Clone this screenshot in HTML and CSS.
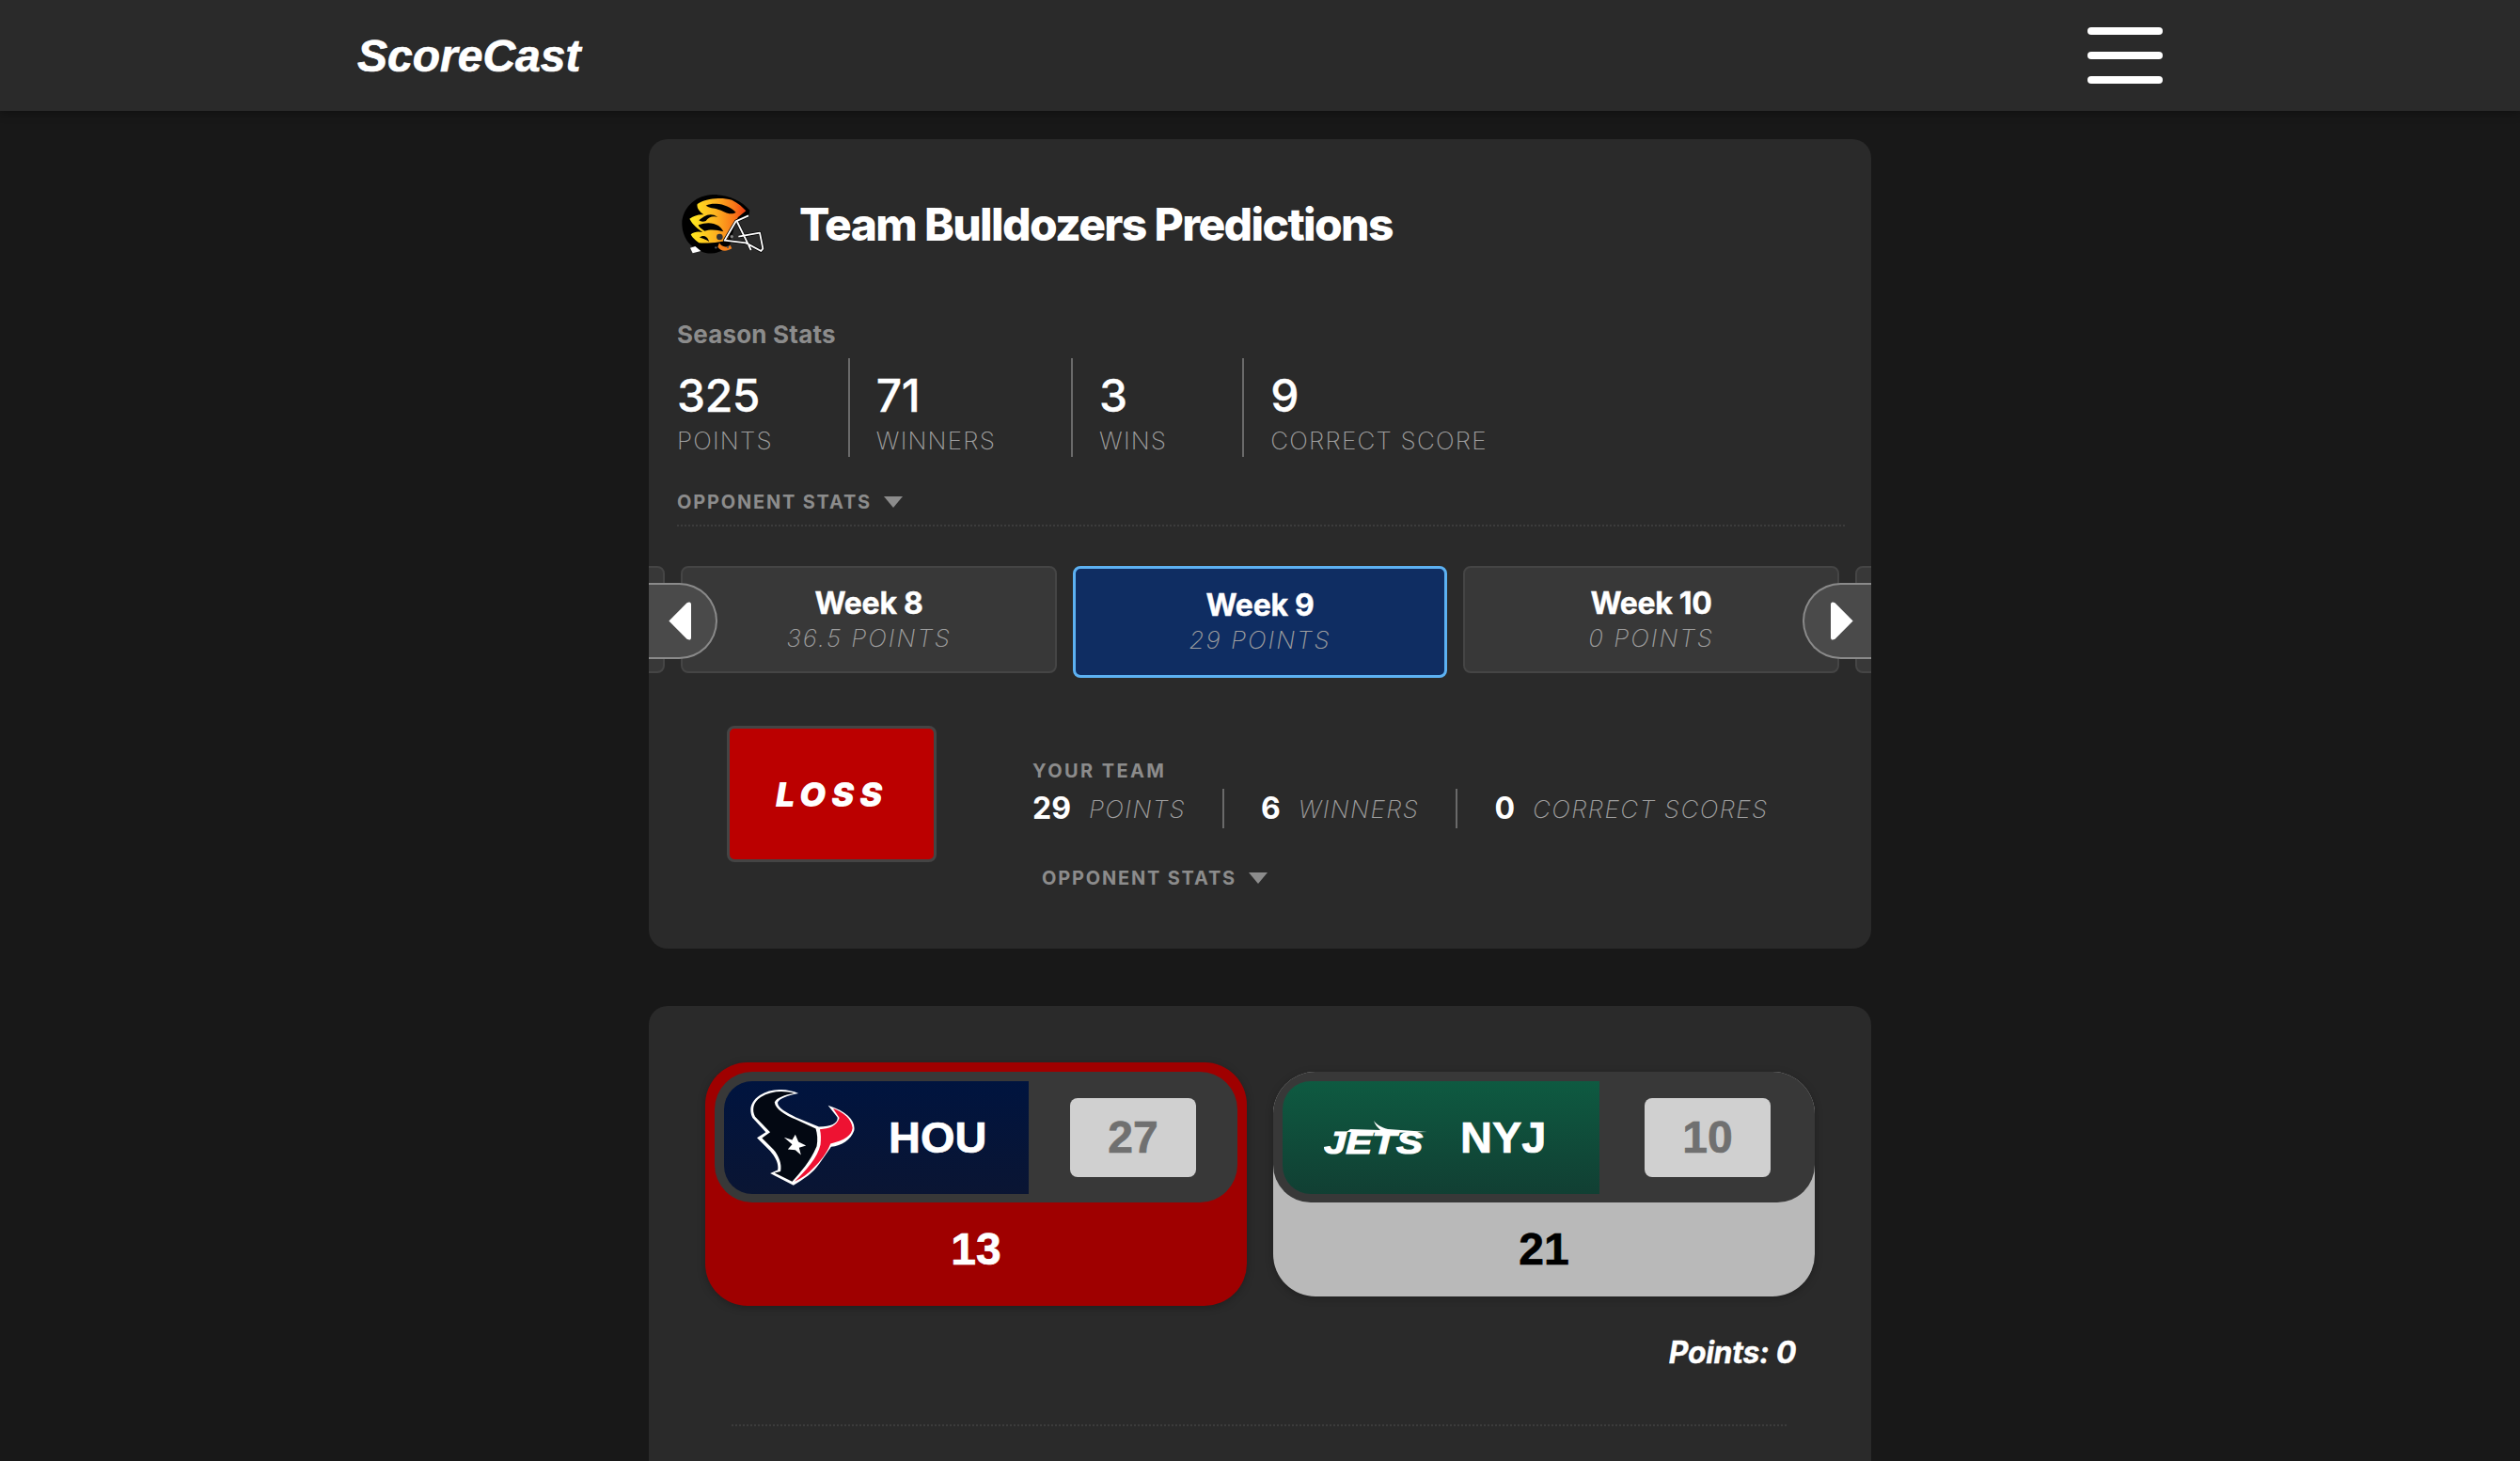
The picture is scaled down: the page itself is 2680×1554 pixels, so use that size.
FILE: index.html
```html
<!DOCTYPE html>
<html lang="en">
<head>
<meta charset="utf-8">
<title>ScoreCast</title>
<link rel="stylesheet" href="styles.css">
</head>
<body>
<header class="topbar">
  <div class="brand">ScoreCast</div>
  <div class="burger"><span></span><span></span><span></span></div>
</header>
<main class="page">
  <section class="card summary">
    <div class="title-row">
      <svg class="helmet" viewBox="45 75 264 195" aria-hidden="true">
        <defs>
          <linearGradient id="flame" gradientUnits="userSpaceOnUse" x1="70" x2="250" y1="0" y2="0">
            <stop offset="0" stop-color="#ffec20"/><stop offset=".45" stop-color="#fdb420"/><stop offset=".8" stop-color="#f97518"/><stop offset="1" stop-color="#ee3a12"/>
          </linearGradient>
        </defs>
        <path d="M46 175C44 125 85 84 135 79C185 74 235 95 262 128L258 150L215 170L200 235C180 262 140 275 105 258C70 245 48 215 46 175Z" fill="#000"/>
        <path d="M95 108C120 90 170 85 205 95C225 105 240 118 250 130L225 150L205 185L190 225C170 228 130 235 100 232C90 225 78 215 74 205C85 195 100 195 112 198C95 185 80 175 70 155C85 145 100 140 115 142C100 130 92 120 95 108Z" fill="url(#flame)"/>
        <path d="M122 113C150 100 195 110 218 135C205 143 190 138 170 128C150 120 135 122 122 113Z" fill="#000"/>
        <path d="M100 160C115 148 135 132 160 150C145 145 130 150 122 162C115 165 105 165 100 160Z" fill="#000"/>
        <path d="M98 175C130 162 165 168 178 196C160 190 135 188 118 194C108 188 100 182 98 175Z" fill="#000"/>
        <path d="M102 215C112 205 128 210 132 228C122 220 112 218 102 215Z" fill="#000"/>
        <path d="M165 232C172 245 185 248 200 240L205 250C185 262 170 258 160 245Z" fill="#f5811c"/>
        <circle cx="166" cy="213" r="10" fill="#333"/>
        <path d="M72 248L88 243L106 258L80 265Z" fill="#fff"/>
        <circle cx="154" cy="247" r="3.5" fill="#555"/><circle cx="192" cy="246" r="3.5" fill="#555"/>
        <path d="M258 145L218 163L182 224L250 232L298 258L304 250L294 200L226 212M222 165L266 255" fill="none" stroke="#000" stroke-width="10" stroke-linejoin="round"/>
        <path d="M258 145L218 163L182 224L250 232L298 258L304 250L294 200L226 212M222 165L266 255" fill="none" stroke="#fff" stroke-width="5.5" stroke-linejoin="round"/>
        <circle cx="205" cy="212" r="6" fill="#888" stroke="#111" stroke-width="2"/>
      </svg>
      <h1 class="title">Team Bulldozers Predictions</h1>
    </div>
    <div class="season-label">Season Stats</div>
    <div class="stats">
      <div class="stat"><div class="stat-value">325</div><div class="stat-name">POINTS</div></div>
      <div class="stat"><div class="stat-value">71</div><div class="stat-name">WINNERS</div></div>
      <div class="stat"><div class="stat-value">3</div><div class="stat-name">WINS</div></div>
      <div class="stat"><div class="stat-value">9</div><div class="stat-name">CORRECT SCORE</div></div>
    </div>
    <div class="toggle toggle-season">OPPONENT STATS<i class="caret"></i></div>
    <div class="rule"></div>
    <div class="weeks">
      <div class="week"></div>
      <div class="week"><b>Week 8</b><em>36.5 POINTS</em></div>
      <div class="week active"><b>Week 9</b><em>29 POINTS</em></div>
      <div class="week"><b>Week 10</b><em>0 POINTS</em></div>
      <div class="week"></div>
      <div class="arrow arrow-left"><svg viewBox="0 0 24 40" preserveAspectRatio="none" aria-hidden="true"><path d="M20 2L3 20L20 38Q24 40 24 36V4Q24 0 20 2Z" fill="#fff"/></svg></div>
      <div class="arrow arrow-right"><svg viewBox="0 0 24 40" preserveAspectRatio="none" aria-hidden="true"><path d="M4 2L21 20L4 38Q0 40 0 36V4Q0 0 4 2Z" fill="#fff"/></svg></div>
    </div>
    <div class="result">
      <div class="loss">LOSS</div>
      <div class="details">
        <div class="your-team">YOUR TEAM</div>
        <div class="tally">
          <div class="tally-item"><strong>29</strong><em>POINTS</em></div>
          <div class="tally-item"><strong>6</strong><em>WINNERS</em></div>
          <div class="tally-item"><strong>0</strong><em>CORRECT SCORES</em></div>
        </div>
        <div class="toggle toggle-week">OPPONENT STATS<i class="caret"></i></div>
      </div>
    </div>
  </section>

  <section class="card games">
    <div class="matchup">
      <div class="tile tile-loss">
        <div class="tile-top">
          <div class="team team-hou">
            <svg class="logo-hou" viewBox="85 60 335 305" aria-hidden="true">
              <path d="M238 72C200 55 150 55 115 78C85 98 80 125 92 150L134 195L106 213L148 255C165 275 176 295 172 316L148 326L222 364C255 345 285 325 305 295L342 242C375 238 405 220 415 190C420 160 395 130 332 110L362 148C365 165 345 178 303 178L230 148C200 132 170 118 172 100C178 88 205 78 238 72Z" fill="#fff"/>
              <path d="M225 72C190 62 150 64 118 84C92 102 90 125 100 146L148 195L122 214L158 250C176 270 186 298 181 320L162 325L218 352C245 322 275 290 296 240C300 220 298 200 293 184L230 155C195 140 165 122 162 100C168 86 195 76 225 72Z" fill="#030812"/>
              <path d="M306 186C335 186 360 175 368 150L348 120C380 130 408 155 410 182C408 205 385 222 340 232C328 262 310 285 285 310C268 328 250 342 226 352C260 320 300 275 308 235C310 218 310 200 306 186Z" fill="#ee1232"/>
              <path d="M228 203L238 226L262 238L240 245L246 268L228 252L204 250L218 234L192 212L218 220Z" fill="#fff"/>
            </svg>
            <span class="code">HOU</span>
          </div>
          <div class="score-box"><span>27</span></div>
        </div>
        <div class="tile-number">13</div>
      </div>
      <div class="tile tile-neutral">
        <div class="tile-top">
          <div class="team team-nyj">
            <svg class="logo-nyj" viewBox="0 0 110 44" aria-hidden="true">
              <path d="M53 4C56 8 60 11 68 13L110 16L70 17L24 16L28 13L60 14C57 11 54 8 53 4Z" fill="#fff"/>
              <text x="0" y="39" textLength="105" lengthAdjust="spacingAndGlyphs" class="jets-word">JETS</text>
            </svg>
            <span class="code">NYJ</span>
          </div>
          <div class="score-box"><span>10</span></div>
        </div>
        <div class="tile-number">21</div>
      </div>
    </div>
    <div class="points">Points: 0</div>
    <div class="rule rule-game"></div>
  </section>
</main>
</body>
</html>
```
FILE: styles.css
```css
* { box-sizing: border-box; }
html, body { margin: 0; height: 100%; }
body {
  background: #181818;
  color: #fff;
  font-family: Inter, "Liberation Sans", sans-serif;
  height: 1554px;
  overflow: hidden;
}
.topbar {
  height: 118px;
  background: #2a2a2a;
  box-shadow: 0 2px 10px rgba(0,0,0,.35);
  display: flex;
  align-items: center;
  justify-content: space-between;
  padding: 0 380px;
  position: relative;
}
.brand {
  font: italic 700 48px/1 "Liberation Sans", sans-serif;
  -webkit-text-stroke: .7px #fff;
  padding-top: 2px;
}
.burger { width: 80px; display: flex; flex-direction: column; gap: 18px; }
.burger span { height: 8px; border-radius: 4px; background: #fff; }
.page { width: 1300px; margin: 30px auto 0; display: flex; flex-direction: column; gap: 61px; }
.card { background: #2a2a2a; border-radius: 20px; }
.summary { height: 861px; padding: 58px 28px 0 30px; }
.title-row { display: flex; align-items: center; height: 65px; padding-left: 5px; gap: 37px; }
.helmet { width: 88px; height: 65px; flex: none; }
.title { margin: 0; font-size: 48px; font-weight: 800; line-height: 1; letter-spacing: -1.65px; }
.season-label { margin-top: 70px; font-size: 26px; font-weight: 700; line-height: 30px; letter-spacing: .2px; color: #8c8c8c; }
.stats { display: flex; height: 105px; margin-top: 10px; }
.stat { padding: 13px 80px 0 28px; border-right: 2px solid #6a6a6a; }
.stat:first-child { padding-left: 0; }
.stat:last-child { border-right: 0; }
.stat-value { font-size: 48px; line-height: 54px; font-weight: 500; letter-spacing: -.4px; -webkit-text-stroke: .3px #fff; }
.stat-name { font-size: 26px; line-height: 32px; font-weight: 200; color: #a0a0a0; letter-spacing: 1.2px; margin-top: 5px; }
.toggle { display: flex; align-items: center; font-size: 20px; line-height: 24px; font-weight: 700; letter-spacing: 1.8px; color: #8c8c8c; }
.caret { width: 0; height: 0; border-left: 10px solid transparent; border-right: 10px solid transparent; border-top: 12px solid #8c8c8c; margin-left: 13px; }
.toggle-season { margin-top: 36px; }
.rule { border-top: 2px dotted #3c3c3c; }
.summary .rule { margin-top: 12px; width: 1242px; }
.weeks {
  position: relative;
  margin: 42px -28px 0 -30px;
  display: flex;
  justify-content: center;
  align-items: flex-start;
  gap: 17px;
  overflow: hidden;
  height: 122px;
}
.week {
  flex: none;
  width: 400px;
  height: 114px;
  border: 2px solid #454545;
  border-radius: 8px;
  background: #383838;
  display: flex;
  flex-direction: column;
  align-items: center;
  padding-top: 20px;
}
.week.active {
  width: 398px;
  height: 119px;
  background: #0f2d62;
  border: 3px solid #5cb1f2;
  padding-top: 21px;
}
.week b { font-size: 32px; line-height: 36px; font-weight: 700; letter-spacing: -.3px; -webkit-text-stroke: .4px #fff; }
.week em { font-size: 26px; line-height: 32px; font-weight: 200; font-style: italic; letter-spacing: 2px; color: #a0a0a0; margin-top: 3px; }
.arrow {
  position: absolute;
  top: 18px;
  width: 73px;
  height: 81px;
  background: #4a4a4a;
  border: 2px solid #8a8a8a;
  display: flex;
  align-items: center;
}
.arrow svg { width: 27px; height: 43px; }
.arrow-left { left: 0; border-left: 0; border-radius: 0 41px 41px 0; padding-left: 18px; }
.arrow-right { right: 0; border-right: 0; border-radius: 41px 0 0 41px; padding-left: 28px; }
.result { display: flex; gap: 102px; margin: 48px 0 0 53px; }
.loss {
  width: 223px;
  height: 145px;
  background: #bb0000;
  border: 3px solid #444;
  border-radius: 8px;
  display: flex;
  align-items: center;
  justify-content: center;
  font-size: 36px;
  font-weight: 900;
  font-style: italic;
  letter-spacing: 6px;
}
.details { padding-top: 36px; }
.your-team { font-size: 20px; line-height: 24px; font-weight: 700; letter-spacing: 2.4px; color: #8c8c8c; }
.tally { display: flex; margin-top: 7px; height: 42px; }
.tally-item { display: flex; align-items: center; gap: 19px; padding: 0 39px; border-right: 2px solid #6a6a6a; }
.tally-item:first-child { padding-left: 0; }
.tally-item:last-child { border-right: 0; }
.tally strong { font-size: 32px; font-weight: 700; line-height: 1; }
.tally em { font-size: 26px; font-weight: 200; font-style: italic; letter-spacing: 1.4px; color: #a0a0a0; }
.toggle-week { margin: 41px 0 0 10px; }
.games { height: 600px; padding: 60px 0 0 60px; }
.matchup { display: flex; align-items: center; gap: 28px; }
.tile { width: 576px; border-radius: 45px; overflow: hidden; box-shadow: 0 2px 8px rgba(0,0,0,.25); }
.tile-loss { background: #9f0000; padding: 10px; }
.tile-neutral { background: #b9b9b9; color: #000; }
.tile-top { height: 139px; background: #383838; border-radius: 40px; display: flex; align-items: center; padding-left: 10px; }
.team { flex: 1; height: 120px; display: flex; align-items: center; border-radius: 30px 0 0 30px; color: #fff; }
.team-hou { background: linear-gradient(#00143f, #0a1533); padding-left: 28px; gap: 35px; }
.team-nyj { background: linear-gradient(#0e5a41, #113f33); padding-left: 44px; gap: 35px; }
.logo-hou { width: 112px; height: 102px; }
.logo-nyj { width: 110px; height: 44px; }
.jets-word { font: italic 700 33px "Liberation Sans", sans-serif; fill: #fff; stroke: #fff; stroke-width: 1.2px; }
.code { font: 700 47px/1 "Liberation Sans", sans-serif; -webkit-text-stroke: .7px #fff; }
.score-box {
  width: 134px;
  height: 84px;
  background: #d0d0d0;
  border-radius: 8px;
  display: flex;
  align-items: center;
  justify-content: center;
  font: 700 48px/1 "Liberation Sans", sans-serif;
  -webkit-text-stroke: .7px #707070;
  color: #707070;
}
.tile-loss .score-box { margin: 0 44px; }
.tile-neutral .score-box { margin: 0 47px 0 48px; }
.tile-number { height: 100px; display: flex; align-items: center; justify-content: center; font: 700 48px/1 "Liberation Sans", sans-serif; -webkit-text-stroke: .7px currentColor; }
.points { margin: 31px 80px 0 0; text-align: right; font-size: 32px; line-height: 38px; font-weight: 700; font-style: italic; letter-spacing: -.3px; -webkit-text-stroke: .4px #fff; }
.rule-game { margin: 57px 0 0 28px; width: 1122px; }
```
